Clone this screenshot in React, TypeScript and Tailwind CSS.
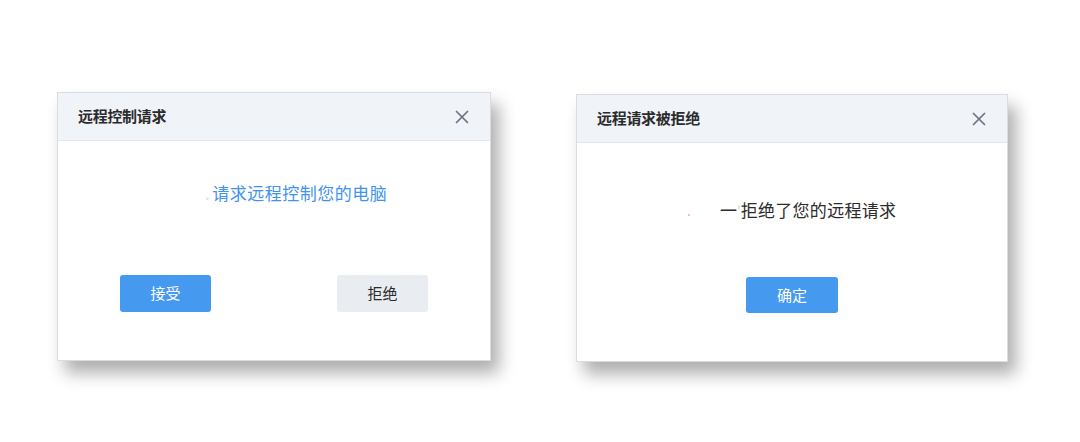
import React from 'react';

const CloseIcon: React.FC = () => (
    <svg width="16" height="16" viewBox="0 0 16 16" className="text-[#6b7280]">
        <path d="M2.5 2.5 L13.5 13.5 M13.5 2.5 L2.5 13.5" stroke="currentColor" strokeWidth="1.7" strokeLinecap="round" />
    </svg>
);

const DialogHeader: React.FC<{ title: string; closeRight: string }> = ({ title, closeRight }) => (
    <div className="h-[48px] flex items-center justify-between pl-[20px] bg-[#f0f3f8] border-b border-[#e3e7ed]">
        <span className="text-[15px] font-bold text-[#2b2b2b] tracking-[-0.3px]">{title}</span>
        <span className={closeRight}>
            <CloseIcon />
        </span>
    </div>
);

const font = { fontFamily: '"Noto Sans CJK SC", "Noto Sans", sans-serif' };

export default function App() {
    return (
        <div className="w-[1080px] h-[442px] bg-white flex items-start pl-[57px]" style={font}>
            {/* 远程控制请求 */}
            <div className="mt-[92px] w-[434px] h-[269px] bg-white border border-[#d9dde3] shadow-[8px_12px_16px_rgba(0,0,0,0.32)] flex flex-col">
                <DialogHeader title="远程控制请求" closeRight="pr-[20px]" />
                <div className="flex-1 flex flex-col">
                    <div className="mt-[40px] h-[24px] flex items-center pl-[147px] text-[17px] leading-[24px] text-[#3f93ee] tracking-[0.5px]">
                        <span className="text-[#c9ddf5] mr-[2px]">.</span>
                        <span>请求远程控制您的电脑</span>
                    </div>
                    <div className="mt-[70px] flex justify-between px-[62px]">
                        <button className="w-[91px] h-[37px] rounded-[3px] bg-[#4599ef] text-white text-[15px]">接受</button>
                        <button className="w-[91px] h-[37px] rounded-[3px] bg-[#e9ecf1] text-[#2b2b2b] text-[15px]">拒绝</button>
                    </div>
                </div>
            </div>

            {/* 远程请求被拒绝 */}
            <div className="mt-[94px] ml-[85px] w-[432px] h-[268px] bg-white border border-[#d9dde3] shadow-[8px_12px_16px_rgba(0,0,0,0.32)] flex flex-col">
                <DialogHeader title="远程请求被拒绝" closeRight="pr-[20px]" />
                <div className="flex-1 flex flex-col">
                    <div className="mt-[55px] h-[24px] flex items-center pl-[111px] text-[17px] leading-[24px] text-[#2b2b2b] tracking-[0.3px]">
                        <span className="w-[2px] h-[2px] bg-[#f0c8a8] mt-[10px] mr-[30px]"></span>
                        <span>一</span>
                        <span className="text-[#c8c8c8] text-[12px] tracking-normal">'</span>
                        <span>拒绝了您的远程请求</span>
                    </div>
                    <div className="mt-[55px] flex justify-center">
                        <button className="w-[92px] h-[36px] rounded-[3px] bg-[#4599ef] text-white text-[15px]">确定</button>
                    </div>
                </div>
            </div>
        </div>
    );
}
